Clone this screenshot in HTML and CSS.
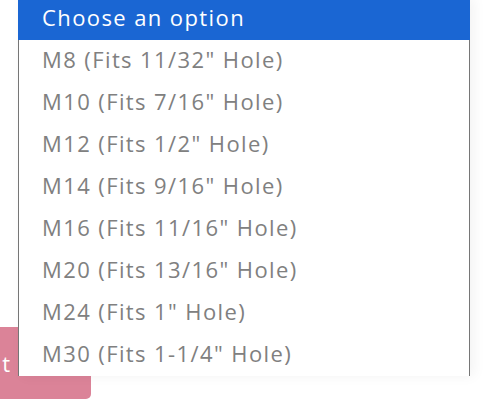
FILE: index.html
```html
<!DOCTYPE html>
<html>
<head>
<meta charset="utf-8">
<link rel="stylesheet" href="styles.css">
</head>
<body>
<div class="page">
  <button class="cart-btn">Add to cart</button>
  <ul class="dropdown">
    <li class="opt selected">Choose an option</li>
    <li class="opt">M8 (Fits 11/32" Hole)</li>
    <li class="opt">M10 (Fits 7/16" Hole)</li>
    <li class="opt">M12 (Fits 1/2" Hole)</li>
    <li class="opt">M14 (Fits 9/16" Hole)</li>
    <li class="opt">M16 (Fits 11/16" Hole)</li>
    <li class="opt">M20 (Fits 13/16" Hole)</li>
    <li class="opt">M24 (Fits 1" Hole)</li>
    <li class="opt">M30 (Fits 1-1/4" Hole)</li>
  </ul>
</div>
</body>
</html>
```
FILE: styles.css
```css
html, body {
  margin: 0;
  padding: 0;
  background: #ffffff;
  width: 488px;
  height: 406px;
  overflow: hidden;
  font-family: "Open Sans", "Noto Sans", sans-serif;
}
.page {
  position: relative;
  width: 488px;
  height: 406px;
}
.cart-btn {
  position: absolute;
  left: -140px;
  top: 327px;
  width: 231px;
  height: 72px;
  border: none;
  border-radius: 0 0 5px 0;
  background: #db8398;
  color: #ffffff;
  font-family: inherit;
  font-size: 22px;
  letter-spacing: 3px;
  text-align: right;
  padding: 0 78px 0 0;
  line-height: 64px;
}
.dropdown {
  position: absolute;
  left: 18px;
  top: -2px;
  width: 450px;
  margin: 0;
  padding: 0;
  list-style: none;
  background: #ffffff;
  border-left: 1px solid #767676;
  border-right: 1px solid #767676;
  box-shadow: 4px 0 12px rgba(0, 0, 0, 0.05);
}
.opt {
  height: 42px;
  line-height: 38px;
  padding-left: 23px;
  font-size: 22px;
  letter-spacing: 1.4px;
  color: #808080;
  white-space: nowrap;
}
.opt.selected {
  background: #1a66d3;
  color: #ffffff;
  margin: 0 -1px;
  padding-left: 24px;
}
```
